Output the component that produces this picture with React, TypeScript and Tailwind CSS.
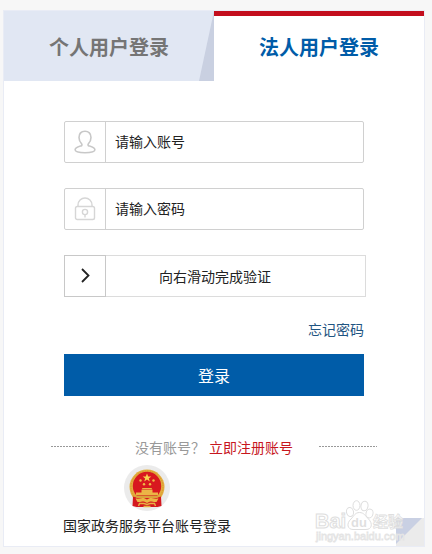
import { useState } from 'react';
import type { ReactNode } from 'react';
import clsx from 'clsx';

type UserKind = 'personal' | 'corporate';

const TABS: { kind: UserKind; label: string }[] = [
  { kind: 'personal', label: '个人用户登录' },
  { kind: 'corporate', label: '法人用户登录' },
];

function UserIcon() {
  return (
    <svg width="22" height="24" viewBox="0 0 22 24" fill="none" stroke="#c8c8c8" strokeWidth="1.6" aria-hidden="true">
      <path d="M11 1.200c-3.600 0-6 2.400-6 6.200 0 2.600 1.200 4.800 2.600 6.300.7.8.4 1.900-.5 2.200-3 .9-6 1.600-6 3.900 0 2.200 4.300 2.900 9.900 2.900s9.900-.7 9.900-2.900c0-2.300-3-3-6-3.900-.9-.3-1.200-1.400-.5-2.200 1.400-1.500 2.600-3.700 2.600-6.300 0-3.800-2.400-6.200-6-6.200z" />
    </svg>
  );
}

function LockIcon() {
  return (
    <svg width="22" height="24" viewBox="0 0 22 24" fill="none" stroke="#d6d6d6" strokeWidth="1.4" aria-hidden="true">
      <rect x="1.500" y="9.500" width="19" height="13" rx="1.800" />
      <path d="M4 9.300V8a7 7 0 0 1 14 0v1.300" />
      <circle cx="11" cy="15" r="2.600" />
      <path d="M11 17.600v3" />
    </svg>
  );
}

function Emblem() {
  return (
    <svg width="46" height="46" viewBox="0 0 46 46" aria-hidden="true">
      <circle cx="23" cy="23" r="23" fill="#ebebeb" />
      <circle cx="23" cy="22" r="17.500" fill="#e3ad3e" />
      <circle cx="23" cy="22" r="16" fill="none" stroke="#d0942f" strokeWidth=".8" strokeDasharray="1.500 1" />
      <path d="M9 31.500L8.500 41l4 1h21l4-1-.5-9.500-5 1.500H14z" fill="#d4181f" />
      <circle cx="23" cy="21" r="14.200" fill="#d8181f" />
      <path d="M23 8.500l1.200 3h3.100l-2.500 1.900 1 3-2.800-1.800-2.800 1.800 1-3-2.500-1.900h3.100z" fill="#f8d34f" />
      <g fill="#eebc45">
        <circle cx="16.500" cy="15.500" r="1.200" />
        <circle cx="29.500" cy="15.500" r="1.200" />
        <circle cx="20" cy="19.200" r="1.200" />
        <circle cx="26" cy="19.200" r="1.200" />
      </g>
      <path d="M18.500 23h9l1 1.500h-11zM17.500 25h11v2.500H34v2.500H12v-2.500h5.500z" fill="#ecb546" />
      <path d="M10 30.500h26l-3 2.500H13z" fill="#d9a23a" />
      <path d="M11.500 33.500c4 .5 6-.5 8.500-.5l3 1.500 3-1.500c2.500 0 4.500 1 8.500.5l-2 3.500c-3 .5-4.500-1-6.500-.5l-3 1.500-3-1.500c-2-.5-3.500 1-6.500.5z" fill="#ebb545" />
      <path d="M14.500 41l1-2.500h4.500l3 1 3-1h4.500l1 2.500M19.500 41.500h7" fill="none" stroke="#e6b143" strokeWidth="1.400" />
    </svg>
  );
}

function Watermark() {
  return (
    <svg width="104" height="46" viewBox="0 0 104 46" fill="#ffffff" fillOpacity=".8" stroke="#dedede" aria-hidden="true">
      <ellipse cx="36" cy="12" rx="3.500" ry="4.500" transform="rotate(-12 36 12)" />
      <ellipse cx="42.500" cy="5.500" rx="3.500" ry="4.800" />
      <ellipse cx="50.500" cy="6" rx="3.500" ry="4.800" transform="rotate(10 50.500 6)" />
      <ellipse cx="55.500" cy="13.500" rx="3.500" ry="4.500" transform="rotate(15 55.500 13.500)" />
      <path d="M45.500 12.500c-4.500 0-5.500 3.500-8.500 6.500-5 4.500-3.500 10.500 2 10.500h13c6 0 7-6 2.500-10.500-3-3-4.500-6.500-9-6.500z" />
      <g className="font-['Liberation_Sans','Noto_Sans_CJK_SC',sans-serif] font-bold">
        <text x="1" y="28" fontSize="20">Bai</text>
        <text x="37" y="27" fontSize="13" fill="#d8d8d8" stroke="none">du</text>
        <text x="59" y="27" fontSize="15" strokeWidth=".8">经验</text>
      </g>
      <text
        x="2"
        y="40"
        fontSize="11"
        strokeWidth=".8"
        stroke="#e4e4e4"
        className="font-['Liberation_Sans',sans-serif]"
      >
        jingyan.baidu.com
      </text>
    </svg>
  );
}

type FieldProps = {
  id: string;
  type: 'text' | 'password';
  label: string;
  icon: ReactNode;
};

function Field({ id, type, label, icon }: FieldProps) {
  return (
    <div className="mb-[25px] flex h-[42px] rounded-[2px] border border-[#d0d0d0]">
      <label htmlFor={id} aria-label={label} className="flex w-[41px] shrink-0 items-center justify-center border-r border-[#d0d0d0]">
        {icon}
      </label>
      <input
        id={id}
        type={type}
        placeholder={label}
        className="min-w-0 flex-1 px-[9px] pb-[2px] text-sm text-[#222] outline-none placeholder:text-[#222]"
      />
    </div>
  );
}

/** Drag-to-verify track: a range input lies over the drawn handle. */
function SlideVerify() {
  const [value, setValue] = useState(0);

  return (
    <div className="relative -mr-[2px] h-[42px] border border-[#dcdcdc]">
      <div className="flex h-full items-center justify-center text-sm text-[#222]">向右滑动完成验证</div>
      <div className="pointer-events-none absolute -inset-y-px -left-px right-[41px]">
        <div
          className="absolute inset-y-0 flex w-[42px] items-center justify-center border border-[#c8c8c8] bg-white"
          style={{ left: `${value}%` }}
        >
          <svg width="10" height="16" viewBox="0 0 10 16" fill="none" stroke="#222" strokeWidth="1.800" aria-hidden="true">
            <path d="M2 1l6.500 6.500L2 14" />
          </svg>
        </div>
      </div>
      <input
        type="range"
        min={0}
        max={100}
        value={value}
        onChange={(e) => setValue(Number(e.target.value))}
        aria-label="向右滑动完成验证"
        className="absolute inset-0 h-full w-full cursor-pointer opacity-0"
      />
    </div>
  );
}

function DashedRule() {
  return (
    <span className="mt-[10px] h-px flex-1 bg-[repeating-linear-gradient(90deg,#999_0,#999_2px,transparent_2px,transparent_3px)]" />
  );
}

export default function App() {
  const [active, setActive] = useState<UserKind>('corporate');

  return (
    <div className="min-h-screen bg-[#f7f7f7] pt-[10px] pr-[7px] pb-[7px] pl-[3px] font-['Noto_Sans_CJK_SC',sans-serif] text-sm text-[#222]">
      <main className="relative border border-[#e9ecf5] bg-white">
        <div role="tablist" className="flex">
          {TABS.map((tab) => (
            <button
              key={tab.kind}
              type="button"
              role="tab"
              aria-selected={active === tab.kind}
              onClick={() => setActive(tab.kind)}
              className={clsx(
                'relative h-[70px] flex-1 border-t-[5px] pb-[3px] text-xl font-bold',
                active === tab.kind
                  ? 'border-[#c30d1d] bg-white text-[#005ca8]'
                  : 'border-[#e1e7f3] bg-[#e1e7f3] text-[#757575]',
              )}
            >
              {tab.label}
              {active !== tab.kind && (
                <svg width="15" height="70" viewBox="0 0 15 70" className="absolute right-0 bottom-0" aria-hidden="true">
                  <path d="M15 0v70H0z" fill="#c9d0e1" />
                </svg>
              )}
            </button>
          ))}
        </div>

        <form className="px-[60px] pt-10" onSubmit={(e) => e.preventDefault()}>
          <Field id="account" type="text" label="请输入账号" icon={<UserIcon />} />
          <Field id="password" type="password" label="请输入密码" icon={<LockIcon />} />
          <SlideVerify />
          <div className="mt-[21px] mb-[14px] flex justify-end">
            <a href="#forgot" className="leading-[22px] text-[#1f5582]">忘记密码</a>
          </div>
          <button type="submit" className="h-[42px] w-full bg-[#005ca8] text-base text-white">
            登录
          </button>
        </form>

        <div className="mt-10 flex items-start gap-[26px] px-[47px]">
          <DashedRule />
          <p className="leading-[22px] whitespace-nowrap text-[#999]">
            没有账号？
            <a href="#register" className="ml-1 text-[#c7161e]">立即注册账号</a>
          </p>
          <DashedRule />
        </div>

        <div className="flex px-[59px] pt-[7px] pb-[9px]">
          <a href="#gov" className="flex flex-col items-center gap-[2px] leading-6">
            <Emblem />
            国家政务服务平台账号登录
          </a>
        </div>

        <svg width="28" height="28" viewBox="0 0 28 28" className="absolute right-0 bottom-0" aria-hidden="true">
          <path d="M0 0h28v28H0z" fill="#ebebeb" />
          <path d="M0 0h26L0 26z" fill="#c9d0e3" />
        </svg>
        <div className="pointer-events-none absolute right-[6px] bottom-0">
          <Watermark />
        </div>
      </main>
    </div>
  );
}
